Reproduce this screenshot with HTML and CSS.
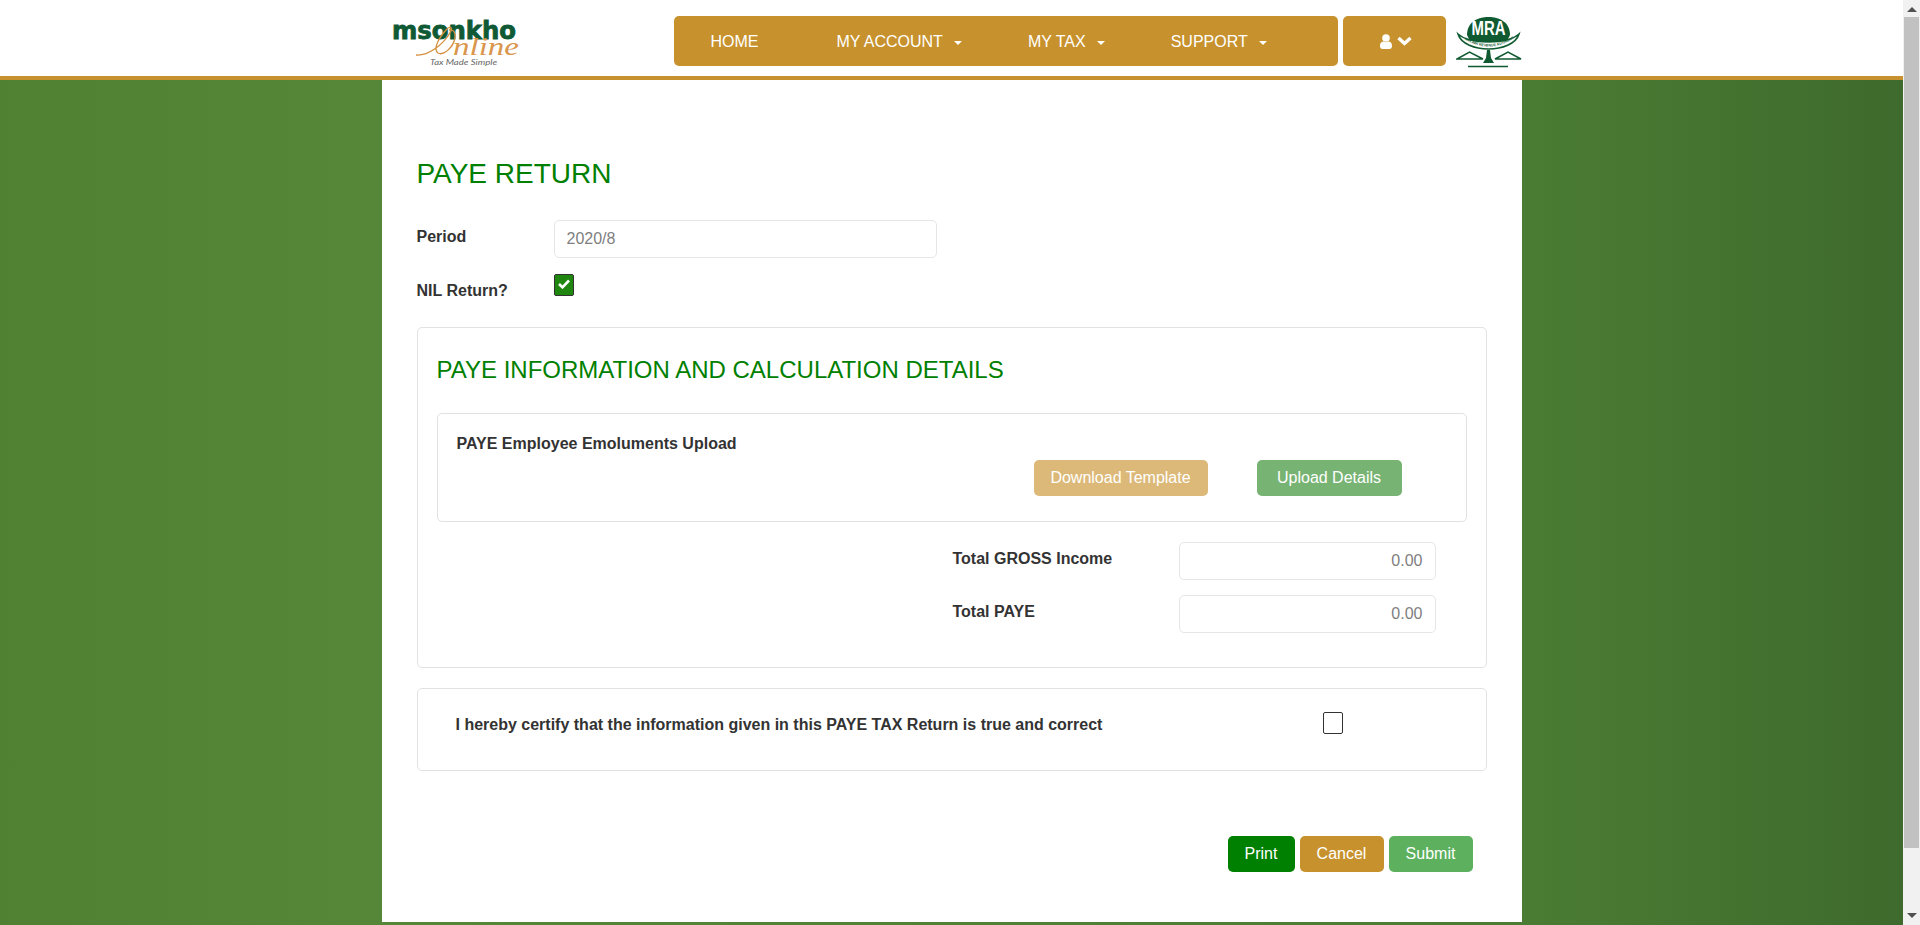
FILE: index.html
```html
<!DOCTYPE html>
<html lang="en">
<head>
<meta charset="utf-8">
<title>PAYE Return</title>
<link rel="stylesheet" href="styles.css">
</head>
<body>
<div class="page">
  <header class="header">
    <div class="container header-inner">
      <div class="logo-block">
        <svg class="logo" width="132" height="50" viewBox="0 0 132 50">
          <text x="1" y="21" class="logo-word" textLength="124" lengthAdjust="spacingAndGlyphs">msonkho</text>
          <path d="M25 37 C36 38 52 28 60 13 C62 9 58 8 55 12 C47 21 42 31 47 35 C52 38 62 30 64 20 C65 14 62 11 58 12" fill="none" stroke="#d48f3e" stroke-width="1.300"/>
          <text x="62" y="37" class="logo-script" textLength="66" lengthAdjust="spacingAndGlyphs">nline</text>
          <text x="39" y="47" class="logo-tag" textLength="67" lengthAdjust="spacingAndGlyphs">Tax Made Simple</text>
        </svg>
      </div>
      <nav class="nav">
        <a class="nav-item nav-home">HOME</a>
        <a class="nav-item">MY ACCOUNT<span class="caret"></span></a>
        <a class="nav-item">MY TAX<span class="caret"></span></a>
        <a class="nav-item">SUPPORT<span class="caret"></span></a>
      </nav>
      <button class="account">
        <svg width="12" height="15" viewBox="0 0 12 15"><circle cx="6" cy="4" r="3.800" fill="#fff"/><path d="M0 12 C0 8.500 2 7.500 3.500 7.500 C5 8.600 7 8.600 8.500 7.500 C10 7.500 12 8.500 12 12 C12 14 11 15 9.500 15 H2.500 C1 15 0 14 0 12Z" fill="#fff"/></svg>
        <svg width="15" height="10" viewBox="0 0 15 10"><path d="M1.500 2 L7.500 7.500 L13.500 2" fill="none" stroke="#fff" stroke-width="3.400"/></svg>
      </button>
      <svg class="mra" width="66" height="52" viewBox="0 0 66 52">
        <path d="M11 18 C11 5 22 0 32.500 0 C43 0 54 5 54 18 L50 26 H15Z" fill="#0f5a30"/>
        <text x="32.500" y="18" class="mra-word" textLength="34" lengthAdjust="spacingAndGlyphs">MRA</text>
        <path d="M2 17 C10 24 22 25 32.500 25 C43 25 55 24 63 17 C60 27 46 32 32.500 32 C19 32 5 27 2 17Z" fill="#fff" stroke="#0f5a30" stroke-width="1.600"/>
        <path id="mra-curve" d="M7 21.500 C16 27 24 29.500 32.500 29.500 C41 29.500 49 27 58 21.500" fill="none"/>
        <text class="mra-tiny"><textPath href="#mra-curve" startOffset="3%">MALAWI REVENUE AUTHORITY</textPath></text>
        <path d="M1 42 L13.500 35 L27 42 Z M39 42 L52 35 L65 42 Z" fill="none" stroke="#0f5a30" stroke-width="1.500"/>
        <path d="M31 33 H34 L35 41 L38 46 H27 L30 41Z" fill="#0f5a30"/>
        <path d="M12 49.500 H52" stroke="#0f5a30" stroke-width="1.500"/>
      </svg>
    </div>
  </header>

  <main class="container main">
    <h1 class="title">PAYE RETURN</h1>
    <div class="form-row period-row">
      <label class="label">Period</label>
      <input class="input period-input" value="2020/8" readonly>
    </div>
    <div class="form-row nil-row">
      <label class="label">NIL Return?</label>
      <span class="check check-on">
        <svg width="12" height="10" viewBox="0 0 12 10"><path d="M1 5 L4.500 8.300 L11 1.500" fill="none" stroke="#fff" stroke-width="2.600"/></svg>
      </span>
    </div>

    <section class="panel info-panel">
      <h2 class="subtitle">PAYE INFORMATION AND CALCULATION DETAILS</h2>
      <div class="upload-panel">
        <div class="upload-title">PAYE Employee Emoluments Upload</div>
        <div class="upload-actions">
          <button class="btn btn-download">Download Template</button>
          <button class="btn btn-upload">Upload Details</button>
        </div>
      </div>
      <div class="totals">
        <label class="label">Total GROSS Income</label>
        <input class="input number" value="0.00" readonly>
        <label class="label">Total PAYE</label>
        <input class="input number" value="0.00" readonly>
      </div>
    </section>

    <section class="panel certify-panel">
      <div class="certify-text">I hereby certify that the information given in this PAYE TAX Return is true and correct</div>
      <span class="check"></span>
    </section>

    <div class="actions">
      <button class="btn btn-print">Print</button>
      <button class="btn btn-cancel">Cancel</button>
      <button class="btn btn-submit">Submit</button>
    </div>
  </main>
</div>
<div class="scrollbar">
  <div class="arrow arrow-up"></div>
  <div class="thumb"></div>
  <div class="arrow arrow-down"></div>
</div>
</body>
</html>
```
FILE: styles.css
```css
* { box-sizing: border-box; }
html, body { margin: 0; height: 100%; }
body {
  display: flex;
  height: 925px;
  overflow: hidden;
  font-family: "Liberation Sans", Arial, sans-serif;
  font-size: 16px;
  color: #333;
}
.page {
  flex: 1;
  min-width: 0;
  height: 925px;
  background: linear-gradient(90deg, #508132 0%, #568738 20%, #4b7c33 80%, #3e6b2d 100%);
}
.container { width: 1140px; margin: 0 auto; }
.header {
  height: 80px;
  background: #fff;
  border-bottom: 4px solid #c7922d;
}
.header-inner { display: flex; height: 76px; padding-top: 16px; align-items: flex-start; }
.logo-block { width: 292px; padding-left: 9px; margin-top: 2px; }
.logo { display: block; }
.logo-word { font: 700 24px "DejaVu Sans", "Liberation Sans", sans-serif; fill: #0f5a35; stroke: #0f5a35; stroke-width: 0.800px; }
.logo-script { font: italic 400 26px "Liberation Serif", serif; fill: #d9964c; }
.logo-tag { font: italic 400 8px "Lato", "Liberation Sans", sans-serif; fill: #666; }

.nav {
  width: 664px;
  height: 50px;
  display: flex;
  align-items: center;
  padding: 2px 0 0 37px;
  background: #c7922d;
  border-radius: 5px;
  color: #fff;
}
.nav-item { display: flex; flex: none; align-items: center; padding-right: 66px; white-space: nowrap; }
.nav-home { padding-right: 78px; }
.caret {
  width: 0;
  height: 0;
  margin-left: 11px;
  margin-top: 2px;
  border-top: 4px solid #fff;
  border-left: 4px solid transparent;
  border-right: 4px solid transparent;
}
.account {
  width: 103px;
  height: 50px;
  margin: 0 10px 0 5px;
  padding: 0 0 0 4px;
  display: flex;
  align-items: center;
  justify-content: center;
  gap: 5px;
  background: #c7922d;
  border: 0;
  border-radius: 5px;
}
.mra { display: block; margin-top: 1px; }
.mra-word { font: 700 20px "Liberation Sans", sans-serif; fill: #fff; text-anchor: middle; }
.mra-tiny { font: 700 3.600px "Liberation Sans", sans-serif; fill: #0f5a30; }

.main {
  height: 842px;
  padding: 75px 35px 0;
  background: #fff;
}
.title {
  margin: 0 0 27px;
  font-size: 28px;
  font-weight: 400;
  line-height: 38px;
  color: #008000;
}
.form-row { display: grid; grid-template-columns: 137px 1fr; }
.period-row { margin-bottom: 16px; }
.nil-row { height: 53px; align-items: start; }
.label { display: block; font-weight: 700; line-height: 22px; padding-top: 6px; color: #333; }
.input {
  display: block;
  height: 38px;
  padding: 0 12px;
  font: 16px "Liberation Sans", Arial, sans-serif;
  color: #808080;
  background: #fff;
  border: 1px solid #e6e6e6;
  border-radius: 5px;
  outline: none;
}
.period-input { width: 383px; }
.number { width: 257px; text-align: right; }
.check {
  display: flex;
  align-items: center;
  justify-content: center;
  width: 20px;
  height: 22px;
  padding-bottom: 3px;
  background: #fff;
  border: 1px solid #333;
  border-radius: 2px;
}
.check-on { background: #1f870f; }

.panel {
  background: #fff;
  border: 1px solid #e2e2e2;
  border-radius: 5px;
}
.info-panel { height: 341px; padding: 0 19px; margin-bottom: 20px; }
.subtitle {
  margin: 0;
  height: 85px;
  font-size: 24px;
  font-weight: 400;
  line-height: 84px;
  color: #008000;
}
.upload-panel {
  height: 109px;
  padding: 18px 64px 0 19px;
  border: 1px solid #e2e2e2;
  border-radius: 5px;
}
.upload-title { font-weight: 700; line-height: 24px; color: #333; }
.upload-actions { display: flex; justify-content: flex-end; gap: 49px; margin-top: 4px; }
.totals {
  display: grid;
  grid-template-columns: 226px 257px;
  grid-auto-rows: 38px;
  row-gap: 15px;
  width: 483px;
  margin: 20px 31px 0 auto;
}
.btn {
  height: 36px;
  padding: 0;
  font: 16px "Liberation Sans", Arial, sans-serif;
  color: #fff;
  border: 0;
  border-radius: 5px;
}
.btn-download { width: 174px; background: #dcb978; }
.btn-upload { width: 145px; background: #77b373; }
.certify-panel {
  display: flex;
  height: 83px;
  padding: 23px 0 0 38px;
  align-items: flex-start;
}
.certify-text { width: 867px; margin-top: 2px; font-weight: 700; line-height: 22px; color: #333; }
.actions { display: flex; justify-content: flex-end; gap: 5px; margin: 65px 14px 0 0; }
.btn-print { width: 67px; background: #008000; }
.btn-cancel { width: 84px; background: #c7922d; }
.btn-submit { width: 84px; background: #5cb05e; }

.scrollbar {
  width: 17px;
  height: 925px;
  flex: none;
  display: flex;
  flex-direction: column;
  align-items: center;
  background: #f1f1f1;
}
.arrow { width: 0; height: 0; border-left: 5px solid transparent; border-right: 5px solid transparent; }
.arrow-up { margin: 7px 0 5px; border-bottom: 5px solid #505050; }
.arrow-down { margin-top: auto; margin-bottom: 7px; border-top: 5px solid #505050; }
.thumb { width: 15px; height: 831px; background: #c1c1c1; }
```
